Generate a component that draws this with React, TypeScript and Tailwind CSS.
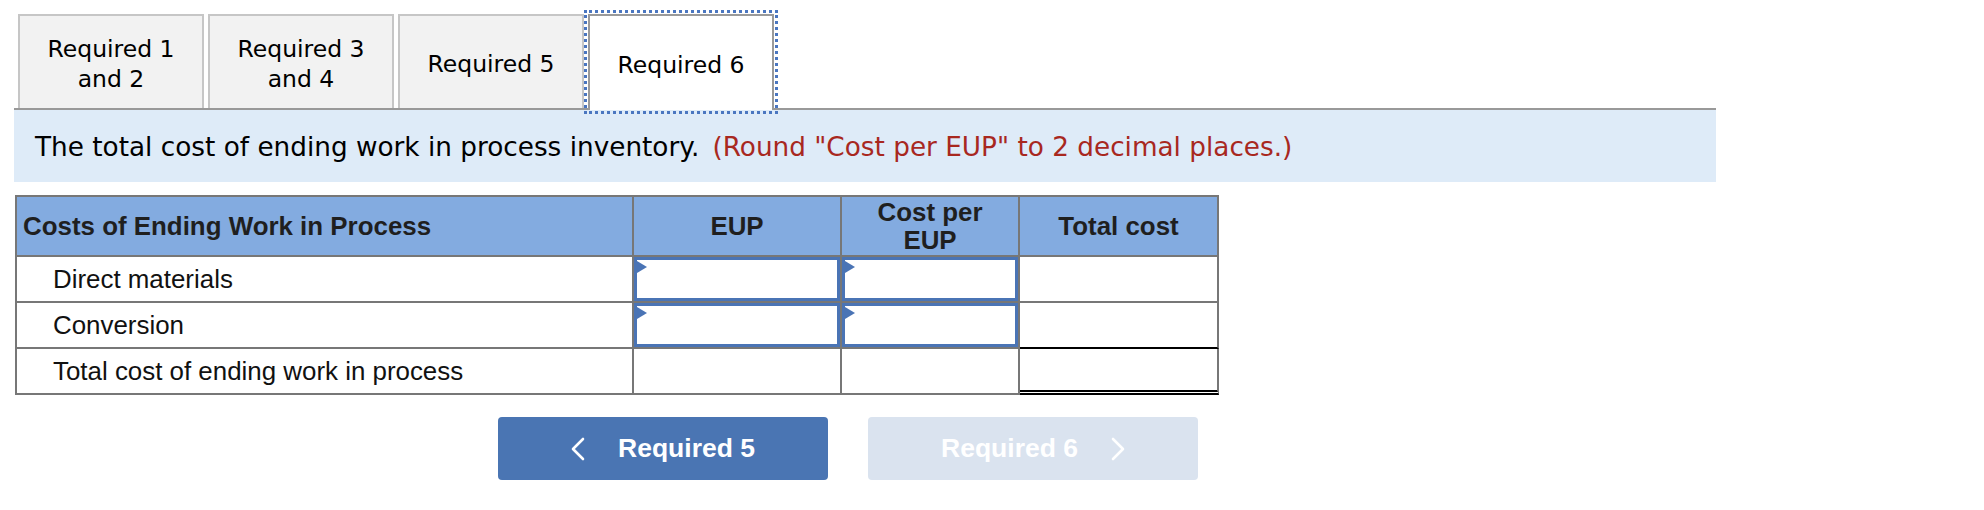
import React from 'react';

const tabs = [
  { label: ['Required 1', 'and 2'], active: false },
  { label: ['Required 3', 'and 4'], active: false },
  { label: ['Required 5'], active: false },
  { label: ['Required 6'], active: true },
];

const rows = [
  { name: 'Direct materials', inputs: true },
  { name: 'Conversion', inputs: true },
  { name: 'Total cost of ending work in process', inputs: false },
];

function InputBox() {
  return (
    <div className="relative h-full w-full border-[3px] border-[#4a74b5] bg-white">
      <div className="absolute left-0 top-[1px] h-0 w-0 border-y-[6px] border-l-[10px] border-y-transparent border-l-[#4a74b5]" />
    </div>
  );
}

function Chevron({ dir }: { dir: 'left' | 'right' }) {
  return (
    <svg width="14" height="24" viewBox="0 0 14 24" fill="none">
      <polyline
        points={dir === 'left' ? '12,2 2,12 12,22' : '2,2 12,12 2,22'}
        stroke="white"
        strokeWidth="2.6"
        strokeLinecap="round"
        strokeLinejoin="round"
      />
    </svg>
  );
}

export default function App() {
  return (
    <div className="min-h-[510px] bg-white px-[14px] pt-[14px]">
      {/* Tabs */}
      <div className="flex w-[1702px] gap-[4px] border-b-2 border-[#999] pl-[4px] font-['DejaVu_Sans',sans-serif] text-[23.5px] leading-[30px] text-black">
        {tabs.map((tab, i) => (
          <div
            key={i}
            className={
              tab.active
                ? 'mb-[-2px] flex h-[96px] w-[186px] flex-col items-center justify-center border-2 border-b-0 border-[#9a9a9a] bg-white pt-[3px] outline-[3px] outline-offset-[1px] outline-dotted outline-[#4a76c0]'
                : 'flex h-[94px] w-[186px] flex-col items-center justify-center border-2 border-b-0 border-[#c6c6c6] bg-[#f2f2f2] pt-[3px]'
            }
          >
            {tab.label.map((line) => (
              <span key={line}>{line}</span>
            ))}
          </div>
        ))}
      </div>

      {/* Instruction */}
      <div className="flex h-[72px] w-[1702px] items-center bg-[#deebf8] pl-[21px] pt-[3px] font-['DejaVu_Sans',sans-serif] text-[26.3px] text-black">
        <span>The total cost of ending work in process inventory.</span>
        <span className="ml-[13px] text-[#a8281f]">(Round "Cost per EUP" to 2 decimal places.)</span>
      </div>

      {/* Table */}
      <div className="mt-[13px] ml-[1px] grid w-[1204px] grid-cols-[617px_208px_178px_199px] border-l-2 border-t-2 border-[#777] font-['Liberation_Sans',Arial,sans-serif] text-[25.9px] text-[#111]">
        <div className="flex h-[60px] items-center border-b-2 border-r-2 border-[#777] bg-[#83abe0] pl-[6px] font-bold text-[#1f1f1f]">
          Costs of Ending Work in Process
        </div>
        <div className="flex h-[60px] items-center justify-center border-b-2 border-r-2 border-[#777] bg-[#83abe0] font-bold text-[#1f1f1f]">
          EUP
        </div>
        <div className="flex h-[60px] flex-col items-center justify-center border-b-2 border-r-2 border-[#777] bg-[#83abe0] font-bold leading-[28px] text-[#1f1f1f]">
          <span>Cost per</span>
          <span>EUP</span>
        </div>
        <div className="flex h-[60px] items-center justify-center border-b-2 border-r-2 border-[#777] bg-[#83abe0] font-bold text-[#1f1f1f]">
          Total cost
        </div>

        {rows.map((row, i) => (
          <React.Fragment key={row.name}>
            <div className="flex h-[46px] items-center border-b-2 border-r-2 border-[#777] pl-[36px]">
              {row.name}
            </div>
            <div className="h-[46px] border-b-2 border-r-2 border-[#777]">
              {row.inputs && <InputBox />}
            </div>
            <div className="h-[46px] border-b-2 border-r-2 border-[#777]">
              {row.inputs && <InputBox />}
            </div>
            <div
              className={
                i === 1
                  ? 'h-[46px] border-b-2 border-r-2 border-b-black border-r-[#777]'
                  : i === 2
                    ? 'h-[46px] border-b-[5px] border-r-2 border-double border-b-black border-r-[#777] [border-right-style:solid]'
                    : 'h-[46px] border-b-2 border-r-2 border-[#777]'
              }
            />
          </React.Fragment>
        ))}
      </div>

      {/* Navigation */}
      <div className="ml-[484px] mt-[22px] flex gap-[40px] font-['Liberation_Sans',Arial,sans-serif] text-[26.5px] font-bold text-white">
        <button className="flex h-[63px] w-[330px] items-center justify-center gap-[33px] rounded-[4px] bg-[#4a75b3]">
          <Chevron dir="left" />
          <span>Required 5</span>
        </button>
        <button className="flex h-[63px] w-[330px] items-center justify-center gap-[33px] rounded-[4px] bg-[#dae3ef]">
          <span>Required 6</span>
          <Chevron dir="right" />
        </button>
      </div>
    </div>
  );
}
